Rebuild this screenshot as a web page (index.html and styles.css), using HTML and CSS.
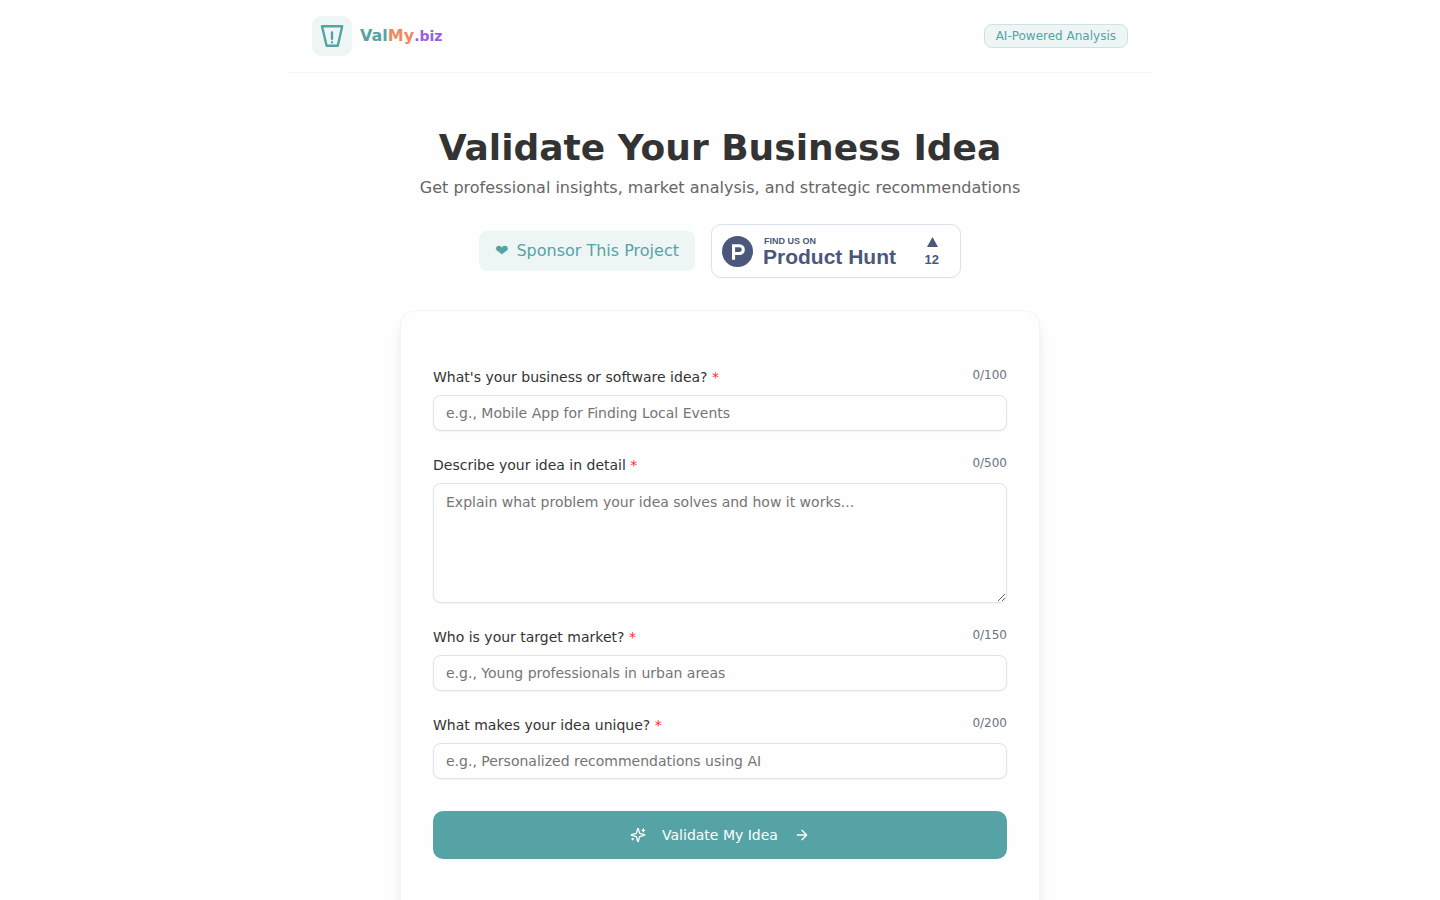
FILE: index.html
```html
<!DOCTYPE html>
<html lang="en">
<head>
<meta charset="utf-8">
<meta name="viewport" content="width=device-width, initial-scale=1">
<title>ValMy.biz</title>
<link rel="stylesheet" href="styles.css">
</head>
<body>
<header class="header">
  <a class="brand" href="#">
    <span class="brand-mark">
      <svg width="24" height="24" viewBox="0 0 24 24" fill="none" stroke="currentColor" stroke-width="2.4" stroke-linejoin="round" aria-hidden="true">
        <path d="M2 2.2H22.2L17.800 21.800H6.600Z"/><path stroke-linecap="round" d="M12 8.500V14.700M12 18.200V18.300"/>
      </svg>
    </span>
    <span class="brand-name"><span class="val">Val</span><span class="my">My</span><span class="biz">.biz</span></span>
  </a>
  <span class="badge">AI-Powered Analysis</span>
</header>
<main class="main">
  <h1 class="title">Validate Your Business Idea</h1>
  <p class="subtitle">Get professional insights, market analysis, and strategic recommendations</p>
  <div class="links">
    <a class="sponsor" href="#"><span>❤</span><span>Sponsor This Project</span></a>
    <a class="hunt" href="#">
      <svg width="31" height="31" viewBox="0 0 31 31" aria-hidden="true">
        <circle cx="15.5" cy="15.5" r="15.5" fill="#4b587c"/>
        <path fill="#fff" fill-rule="evenodd" d="M17.43 15.960h-4.340v-4.650h4.340a2.325 2.325 0 0 1 0 4.650M17.430 8.200H9.990v15.500h3.100v-4.650h4.340a5.425 5.425 0 0 0 0-10.850"/>
      </svg>
      <span class="hunt-text"><span class="hunt-small">FIND US ON</span><span class="hunt-big">Product Hunt</span></span>
      <span class="votes">
        <svg width="13" height="10" viewBox="0 0 13 10" aria-hidden="true"><path d="M7.500 0L13 10H2Z" fill="#4b587c"/></svg>
        <span>12</span>
      </span>
    </a>
  </div>
  <form class="card">
    <div class="field">
      <div class="field-head"><label for="idea">What's your business or software idea? <span class="req">*</span></label><span class="count">0/100</span></div>
      <input class="control" id="idea" type="text" maxlength="100" placeholder="e.g., Mobile App for Finding Local Events">
    </div>
    <div class="field">
      <div class="field-head"><label for="detail">Describe your idea in detail <span class="req">*</span></label><span class="count">0/500</span></div>
      <textarea class="control area" id="detail" maxlength="500" placeholder="Explain what problem your idea solves and how it works..."></textarea>
    </div>
    <div class="field">
      <div class="field-head"><label for="market">Who is your target market? <span class="req">*</span></label><span class="count">0/150</span></div>
      <input class="control" id="market" type="text" maxlength="150" placeholder="e.g., Young professionals in urban areas">
    </div>
    <div class="field">
      <div class="field-head"><label for="unique">What makes your idea unique? <span class="req">*</span></label><span class="count">0/200</span></div>
      <input class="control" id="unique" type="text" maxlength="200" placeholder="e.g., Personalized recommendations using AI">
    </div>
    <button class="submit" type="button">
      <svg width="16" height="16" viewBox="0 0 24 24" fill="none" stroke="currentColor" stroke-width="2" stroke-linecap="round" stroke-linejoin="round" aria-hidden="true"><path d="M9.937 15.500A2 2 0 0 0 8.500 14.063l-6.135-1.582a.5.5 0 0 1 0-.962L8.500 9.936A2 2 0 0 0 9.937 8.500l1.582-6.135a.5.5 0 0 1 .963 0L14.063 8.500A2 2 0 0 0 15.500 9.937l6.135 1.581a.5.5 0 0 1 0 .964L15.500 14.063a2 2 0 0 0-1.437 1.437l-1.582 6.135a.5.5 0 0 1-.963 0z"/><path d="M20 3v4M22 5h-4M4 17v2M5 18H3"/></svg>
      <span>Validate My Idea</span>
      <svg width="16" height="16" viewBox="0 0 24 24" fill="none" stroke="currentColor" stroke-width="2" stroke-linecap="round" stroke-linejoin="round" aria-hidden="true"><path d="M5 12h14M12 5l7 7-7 7"/></svg>
    </button>
  </form>
</main>
</body>
</html>
```
FILE: styles.css
```css
*, *::before, *::after { box-sizing: border-box; }
body {
  margin: 0;
  background: #fefefe;
  color: #333;
  font: 16px/24px "DejaVu Sans", sans-serif;
}
a { color: inherit; text-decoration: none; }
svg { display: block; flex: none; }

.header {
  max-width: 864px;
  margin: 0 auto;
  padding: 16px 24px;
  display: flex;
  align-items: center;
  justify-content: space-between;
  border-bottom: 1px solid #f3f4f4;
}
.brand { display: flex; align-items: center; gap: 8px; }
.brand-mark {
  display: grid;
  place-items: center;
  width: 40px;
  height: 40px;
  border-radius: 10px;
  background: #edf6f5;
  color: #56a3a6;
}
.brand-name { font-weight: 700; }
.val { color: #56a3a6; }
.my { color: #ee8a62; }
.biz { color: #9b5de5; font-size: 14px; }
.badge {
  padding: 3px 11px;
  border: 1px solid #cce3e3;
  border-radius: 8px;
  background: #edf6f5;
  color: #56a3a6;
  font-size: 12px;
  line-height: 16px;
}

.main {
  max-width: 688px;
  margin: 0 auto;
  padding: 55px 24px 48px;
  display: flex;
  flex-direction: column;
  align-items: center;
}
.title { margin: 0; font-size: 36px; line-height: 40px; text-align: center; }
.subtitle { margin: 8px 0 24px; color: #666; text-align: center; }
.links { display: flex; flex-wrap: wrap; align-items: center; justify-content: center; gap: 16px; }
.sponsor {
  display: flex;
  gap: 8px;
  padding: 8px 16px;
  border-radius: 8px;
  background: #edf6f5;
  color: #56a3a6;
}
.hunt {
  display: flex;
  align-items: flex-start;
  width: 250px;
  height: 54px;
  padding: 11px 21px 0 10px;
  border: 1px solid #d9e1ec;
  border-radius: 10px;
  background: #fff;
  color: #4b587c;
  font-family: "Liberation Sans", Arial, sans-serif;
  font-weight: 700;
}
.hunt-text { display: flex; flex-direction: column; margin: 0 auto 0 10px; }
.hunt-small { font-size: 9px; line-height: 10px; padding-left: 1px; }
.hunt-big { font-size: 21px; line-height: 22px; }
.votes { display: flex; flex-direction: column; align-items: center; gap: 5px; padding-top: 1px; font-size: 13px; line-height: 16px; }

.card {
  width: 100%;
  margin-top: 32px;
  padding: 56px 32px;
  display: flex;
  flex-direction: column;
  gap: 24px;
  border: 1px solid #f3f4f4;
  border-radius: 16px;
  background: #fefefe;
  box-shadow: 0 10px 15px -3px rgba(0, 0, 0, .1), 0 4px 6px -4px rgba(0, 0, 0, .1);
}
.field { display: flex; flex-direction: column; gap: 8px; }
.field-head { display: flex; justify-content: space-between; align-items: flex-start; font-size: 14px; line-height: 20px; }
.req { color: #fb2c36; }
.count { color: #6a7282; font-size: 12px; line-height: 16px; }
.control {
  width: 100%;
  height: 36px;
  padding: 4px 12px;
  border: 1px solid #e2e3e4;
  border-radius: 8px;
  background: #fefefe;
  box-shadow: 0 1px 2px rgba(0, 0, 0, .05);
  color: inherit;
  font: 14px/20px "DejaVu Sans", sans-serif;
}
.control::placeholder { color: #757575; }
.area { display: block; height: 120px; padding: 8px 12px; resize: vertical; }
.submit {
  display: flex;
  align-items: center;
  justify-content: center;
  gap: 16px;
  height: 48px;
  margin-top: 8px;
  border: 0;
  border-radius: 10px;
  background: #56a3a6;
  color: #fefefe;
  font: 14px/20px "DejaVu Sans", sans-serif;
  cursor: pointer;
}
```
